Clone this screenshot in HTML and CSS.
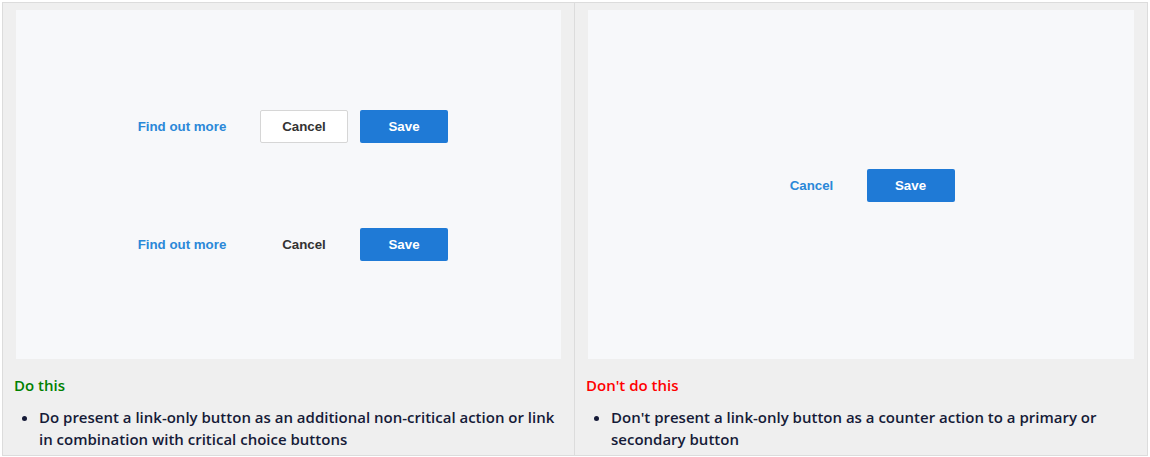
FILE: index.html
```html
<!DOCTYPE html>
<html>
<head>
<meta charset="utf-8">
<link rel="stylesheet" href="styles.css">
</head>
<body>
<div class="table">
  <div class="cell">
    <div class="panel">
      <div class="row">
        <span class="btn link find">Find out more</span>
        <span class="btn secondary">Cancel</span>
        <span class="btn primary">Save</span>
      </div>
      <div class="row">
        <span class="btn link find">Find out more</span>
        <span class="btn plain">Cancel</span>
        <span class="btn primary">Save</span>
      </div>
    </div>
    <div class="heading do">Do this</div>
    <ul class="notes">
      <li>Do present a link-only button as an additional non-critical action or link in combination with critical choice buttons</li>
    </ul>
  </div>
  <div class="cell">
    <div class="panel">
      <div class="row tight">
        <span class="btn link">Cancel</span>
        <span class="btn primary">Save</span>
      </div>
    </div>
    <div class="heading dont">Don't do this</div>
    <ul class="notes">
      <li>Don't present a link-only button as a counter action to a primary or secondary button</li>
    </ul>
  </div>
</div>
</body>
</html>
```
FILE: styles.css
```css
html, body {
  margin: 0;
  padding: 0;
  background: #ffffff;
}
body {
  padding: 2px;
}
.table {
  display: grid;
  grid-template-columns: 571px 573px;
  width: 1146px;
  height: 454px;
  box-sizing: border-box;
  border: 1px solid #dcdcdc;
  background: #efefef;
}
.cell {
  padding: 7px 13px 0 13px;
  box-sizing: border-box;
}
.cell + .cell {
  border-left: 1px solid #dcdcdc;
}
.panel {
  height: 349px;
  padding-top: 1px;
  box-sizing: border-box;
  background: #f7f8fa;
  display: flex;
  flex-direction: column;
  justify-content: center;
  align-items: center;
  gap: 85px;
}
.row {
  display: flex;
  align-items: center;
  justify-content: center;
}
.row.tight {
  gap: 11px;
}
.btn {
  font-family: "Liberation Sans", Arial, sans-serif;
  font-weight: bold;
  font-size: 13.3px;
  height: 33px;
  width: 88px;
  box-sizing: border-box;
  display: flex;
  align-items: center;
  justify-content: center;
  border-radius: 2px;
  padding-top: 1px;
}
.link {
  color: #2b88d8;
}
.find {
  width: 106px;
  margin-right: 25px;
}
.secondary {
  background: #ffffff;
  border: 1px solid #d6d6d6;
  color: #333333;
  margin-right: 12px;
}
.plain {
  color: #333333;
  margin-right: 12px;
}
.primary {
  background: #1f7ad6;
  color: #ffffff;
}
.heading {
  font-family: "Open Sans", "Noto Sans", sans-serif;
  font-weight: 600;
  font-size: 15px;
  line-height: 20px;
  margin-top: 16px;
  margin-left: -2px;
}
.do {
  color: #008000;
}
.dont {
  color: #ff0000;
}
.notes {
  margin: 11px 0 0 0;
  padding: 0 0 0 23px;
  font-family: "Open Sans", "Noto Sans", sans-serif;
  font-weight: 600;
  font-size: 15px;
  line-height: 22px;
  color: #161b38;
}
```
